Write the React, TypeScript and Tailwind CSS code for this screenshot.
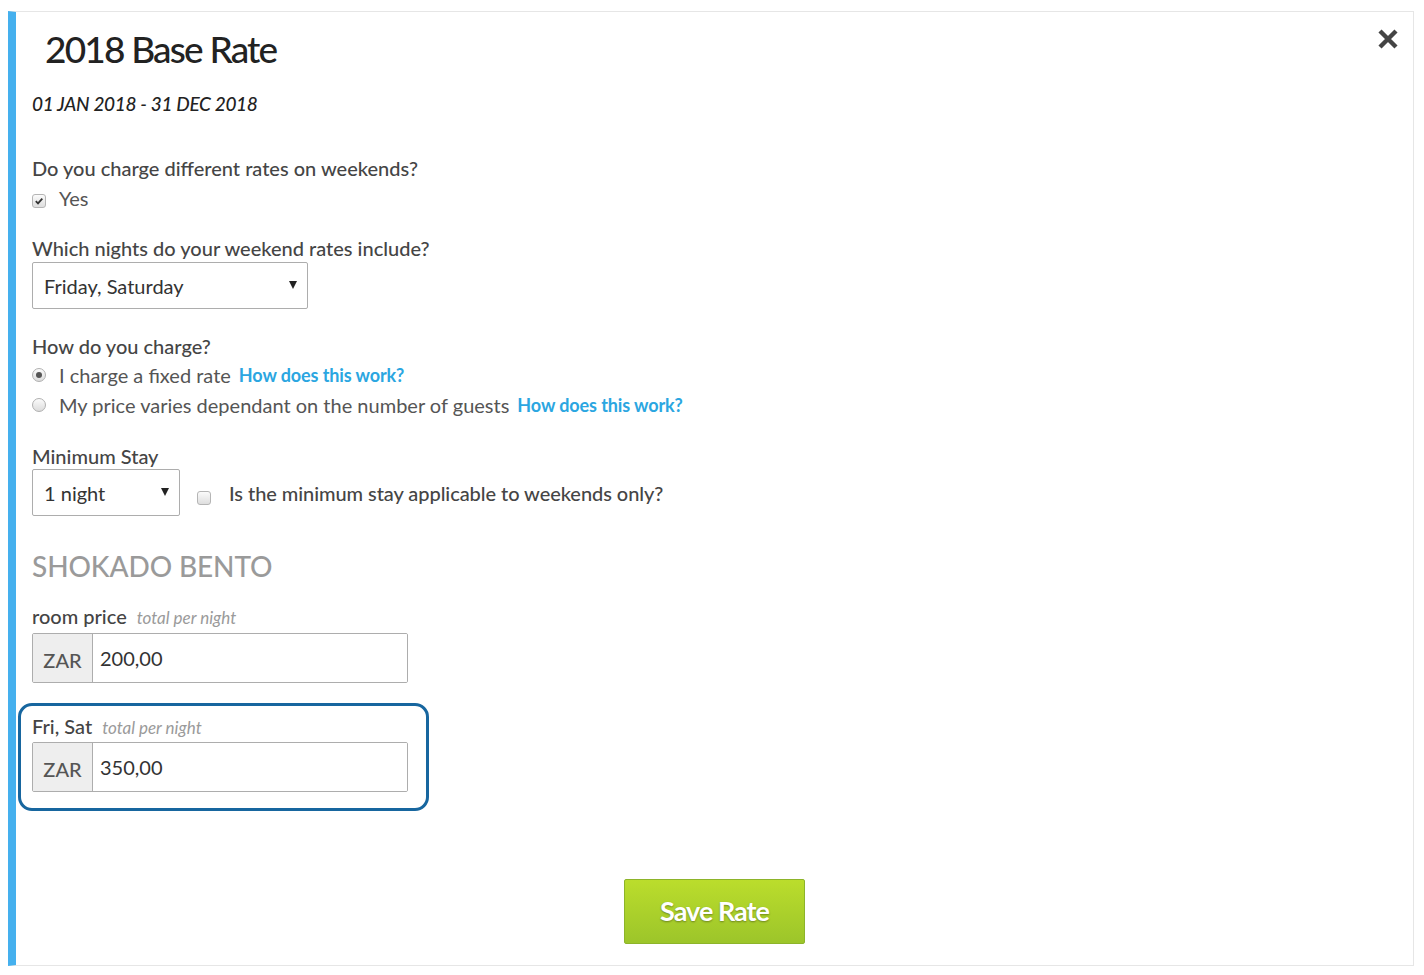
import React from 'react';

const Label: React.FC<{ children: React.ReactNode; className?: string }> = ({ children, className }) => (
  <div className={`text-[20px] leading-[24px] font-medium text-[#454545] ${className ?? ''}`}>{children}</div>
);

const Checkbox: React.FC<{ checked?: boolean; className?: string }> = ({ checked, className }) => (
  <span
    className={`inline-flex items-center justify-center w-[14px] h-[14px] rounded-[3px] border border-[#b5b5b5] bg-gradient-to-b from-[#fbfbfb] to-[#dedede] ${className ?? ''}`}
  >
    {checked && (
      <svg width="10" height="10" viewBox="0 0 10 10">
        <path d="M1.8 5.2 L4 7.4 L8.3 2.6" fill="none" stroke="#333" strokeWidth="1.8" />
      </svg>
    )}
  </span>
);

const Radio: React.FC<{ checked?: boolean }> = ({ checked }) => (
  <span className="inline-flex items-center justify-center w-[14px] h-[14px] rounded-full border border-[#b0b0b0] bg-gradient-to-b from-[#fbfbfb] to-[#dcdcdc]">
    {checked && <span className="w-[6px] h-[6px] rounded-full bg-[#555]" />}
  </span>
);

const Select: React.FC<{ value: string; width: string }> = ({ value, width }) => (
  <div className={`flex items-center justify-between h-[47px] ${width} border border-[#adadad] rounded-[2px] pl-[11px] pr-[10px] bg-white`}>
    <span className="text-[20px] text-[#333]">{value}</span>
    <svg width="8" height="8" viewBox="0 0 8 8" className="mb-[2px]">
      <path d="M0 0 H8 L4 8 Z" fill="#222" />
    </svg>
  </div>
);

const PriceInput: React.FC<{ value: string }> = ({ value }) => (
  <div className="flex h-[50px] w-[376px] border border-[#adadad] rounded-[2px] overflow-hidden">
    <div className="w-[60px] flex items-center justify-center bg-[#eeeeee] border-r border-[#adadad] text-[20px] font-medium text-[#555] pt-[4px]">
      ZAR
    </div>
    <div className="flex-1 flex items-center pl-[7px] text-[20px] text-[#333] bg-white">{value}</div>
  </div>
);

const HowLink: React.FC = () => (
  <span className="text-[18px] font-bold text-[#2ba6e1] tracking-[-0.1px]">How does this work?</span>
);

const FieldLabel: React.FC<{ title: string }> = ({ title }) => (
  <div className="flex items-baseline">
    <span className="text-[20px] leading-[24px] font-medium text-[#444]">{title}</span>
    <span className="ml-[10px] text-[17px] leading-[24px] italic text-[#9a9a9a]">total per night</span>
  </div>
);

export default function App() {
  return (
    <div className="min-h-[975px] bg-white pt-[11px] pl-[8px] font-[family-name:Lato,sans-serif]">
      <div className="relative w-[1406px] h-[955px] border-l-[8px] border-l-[#45b0ee] border-t border-r border-b border-t-[#e6e6e6] border-r-[#e6e6e6] border-b-[#e6e6e6]">
        {/* Close */}
        <button className="absolute top-[17px] right-[15px] w-[20px] h-[20px] flex items-center justify-center">
          <svg width="20" height="20" viewBox="0 0 20 20">
            <path d="M2 2 L18 18 M18 2 L2 18" stroke="#444" strokeWidth="4.4" strokeLinecap="butt" />
          </svg>
        </button>

        <div className="pl-[16px] flex flex-col">
          <h1 className="ml-[13px] mt-[16px] text-[37px] leading-[42px] font-medium text-[#222] tracking-[-1.8px]">
            2018 Base Rate
          </h1>
          <div className="mt-[22px] text-[19px] leading-[24px] italic font-medium text-[#222] tracking-[-0.3px]">
            01 JAN 2018 - 31 DEC 2018
          </div>

          <Label className="mt-[40px]">Do you charge different rates on weekends?</Label>
          <div className="mt-[6px] flex items-start h-[24px]">
            <Checkbox checked className="mt-[8px]" />
            <span className="ml-[13px] text-[20px] leading-[24px] text-[#555]">Yes</span>
          </div>

          <Label className="mt-[26px]">Which nights do your weekend rates include?</Label>
          <div className="mt-[2px]">
            <Select value="Friday, Saturday" width="w-[276px]" />
          </div>

          <Label className="mt-[25px]">How do you charge?</Label>
          <div className="mt-[2px] flex items-center h-[30px]">
            <Radio checked />
            <span className="ml-[13px] text-[20px] text-[#555]">I charge a fixed rate</span>
            <span className="ml-[8px]">
              <HowLink />
            </span>
          </div>
          <div className="flex items-center h-[30px]">
            <Radio />
            <span className="ml-[13px] text-[20px] text-[#555]">My price varies dependant on the number of guests</span>
            <span className="ml-[8px]">
              <HowLink />
            </span>
          </div>

          <Label className="mt-[24px]">Minimum Stay</Label>
          <div className="mt-[1px] flex items-center">
            <Select value="1 night" width="w-[148px]" />
            <Checkbox className="ml-[17px] mt-[10px]" />
            <span className="ml-[18px] text-[20px] font-medium text-[#454545] tracking-[-0.06px]">
              Is the minimum stay applicable to weekends only?
            </span>
          </div>

          <div className="mt-[33px] text-[28px] leading-[34px] font-medium text-[#9a9a9a] tracking-[-0.1px]">
            SHOKADO BENTO
          </div>

          <div className="mt-[21px]">
            <FieldLabel title="room price" />
          </div>
          <div className="mt-[3px]">
            <PriceInput value="200,00" />
          </div>

          <div className="mt-[20px] -ml-[14px] w-[411px] h-[108px] border-[3px] border-[#17669f] rounded-[14px] pl-[11px] pt-[8px]">
            <FieldLabel title="Fri, Sat" />
            <div className="mt-[2px]">
              <PriceInput value="350,00" />
            </div>
          </div>
        </div>

        <div className="flex justify-center mt-[68px]">
          <button className="w-[181px] h-[65px] rounded-[2px] border border-[#8db42a] bg-gradient-to-b from-[#bbdd2c] to-[#9cc52a] text-white text-[27px] font-bold tracking-[-1px] [text-shadow:0_1px_2px_rgba(0,0,0,0.35)]">
            Save Rate
          </button>
        </div>
      </div>
    </div>
  );
}
